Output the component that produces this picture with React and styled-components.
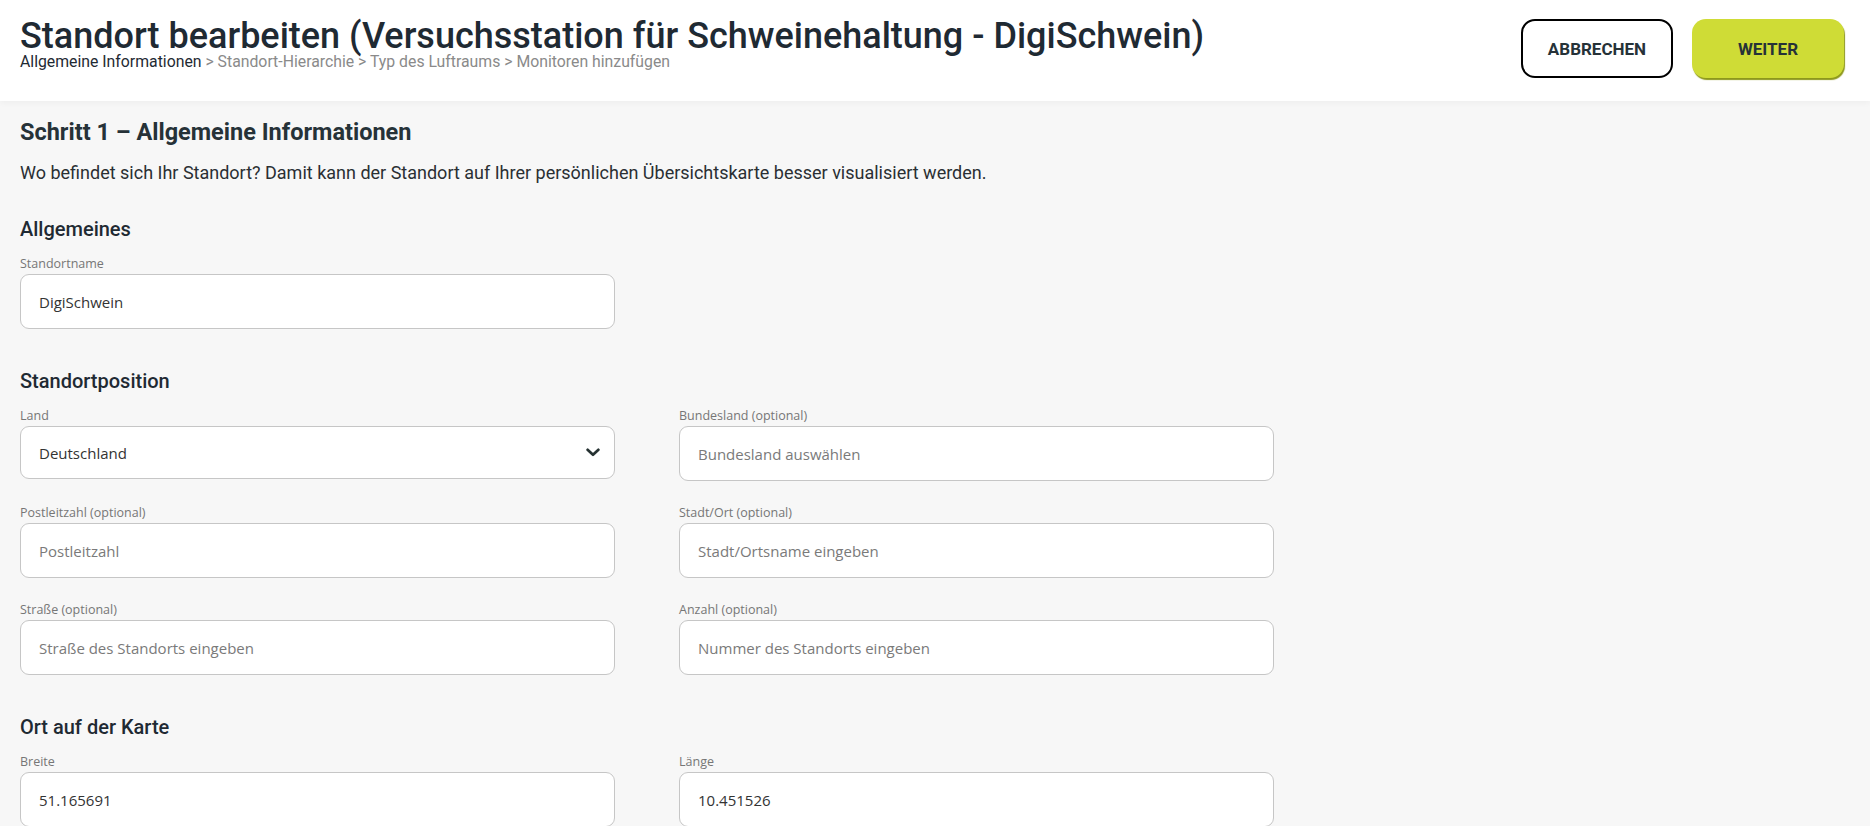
import React from 'react';
import styled, { createGlobalStyle } from 'styled-components';

const GlobalStyle = createGlobalStyle`
  html, body {
    margin: 0;
    padding: 0;
    background: #f7f7f7;
    font-family: Roboto, "Liberation Sans", sans-serif;
    color: #1f2a33;
  }
  * { box-sizing: border-box; }
`;

const Header = styled.header`
  height: 101px;
  background: #fff;
  display: flex;
  justify-content: space-between;
  align-items: flex-start;
  padding: 0 26px 0 20px;
  box-shadow: 0 2px 6px rgba(0, 0, 0, 0.04);
`;

const TitleBlock = styled.div`
  padding-top: 19px;
`;

const Title = styled.h1`
  margin: 0;
  font-size: 36px;
  line-height: 35px;
  font-weight: 500;
  color: #1f2a33;
`;

const Crumbs = styled.div`
  font-size: 15.8px;
  line-height: 16px;
  color: #8a8a8a;
`;

const Crumb = styled.span`
  color: ${(p) => (p.active ? '#1f2a33' : '#8a8a8a')};
`;

const Actions = styled.div`
  display: flex;
  gap: 19px;
  padding-top: 19px;
`;

const Button = styled.button`
  width: 152px;
  height: 59px;
  border-radius: 14px;
  font-family: Roboto, sans-serif;
  font-size: 17px;
  font-weight: 700;
  color: #263238;
  cursor: pointer;
  background: ${(p) => (p.primary ? '#cfdc36' : '#fff')};
  border: ${(p) => (p.primary ? 'none' : '2px solid #000')};
  box-shadow: ${(p) => (p.primary ? '1px 2px 1px #8e981c' : 'none')};
`;

const Main = styled.main`
  padding: 17px 20px 40px;
`;

const StepTitle = styled.h2`
  margin: 0;
  font-size: 23.5px;
  line-height: 28px;
  font-weight: 700;
  color: #263238;
`;

const Intro = styled.p`
  margin: 16px 0 0;
  font-size: 18px;
  line-height: 22px;
  color: #2a2f33;
`;

const Section = styled.section`
  margin-top: ${(p) => p.gap || 40}px;
`;

const SectionTitle = styled.h3`
  margin: 0 0 13px;
  font-size: 20px;
  line-height: 24px;
  font-weight: 500;
  color: #1f2a33;
`;

const FieldGrid = styled.div`
  display: grid;
  grid-template-columns: repeat(${(p) => p.cols || 2}, 595px);
  column-gap: 64px;
  row-gap: 22px;
  align-items: start;
`;

const Field = styled.label`
  display: flex;
  flex-direction: column;
`;

const Label = styled.span`
  font-family: "Open Sans", "Noto Sans", sans-serif;
  font-size: 12.5px;
  line-height: 19px;
  padding-bottom: 1px;
  color: #767676;
`;

const Box = styled.div`
  height: ${(p) => p.h || 55}px;
  background: #fff;
  border: 1px solid #c6c6c6;
  border-radius: 9px;
  display: flex;
  align-items: center;
  justify-content: space-between;
  padding: 0 14px 0 18px;
  font-family: "Open Sans", "Noto Sans", sans-serif;
  font-size: 15px;
  color: ${(p) => (p.placeholder ? '#7a7a7a' : '#333')};
`;

const Chevron = () => (
  <svg width="14" height="9" viewBox="0 0 14 9" fill="none">
    <polyline points="1.6,1.8 7,6.8 12.4,1.8" stroke="#263232" strokeWidth="2.7" strokeLinecap="round" strokeLinejoin="round" />
  </svg>
);

const Input = ({ label, value, placeholder }) => (
  <Field>
    <Label>{label}</Label>
    <Box placeholder={!value ? 1 : undefined}>{value || placeholder}</Box>
  </Field>
);

const Select = ({ label, value }) => (
  <Field>
    <Label>{label}</Label>
    <Box h={53}>
      {value}
      <Chevron />
    </Box>
  </Field>
);

export default function App() {
  return (
    <>
      <GlobalStyle />
      <Header>
        <TitleBlock>
          <Title>Standort bearbeiten (Versuchsstation für Schweinehaltung - DigiSchwein)</Title>
          <Crumbs>
            <Crumb active>Allgemeine Informationen</Crumb> &gt; Standort-Hierarchie &gt; Typ des Luftraums &gt; Monitoren hinzufügen
          </Crumbs>
        </TitleBlock>
        <Actions>
          <Button>ABBRECHEN</Button>
          <Button primary>WEITER</Button>
        </Actions>
      </Header>
      <Main>
        <StepTitle>Schritt 1 – Allgemeine Informationen</StepTitle>
        <Intro>
          Wo befindet sich Ihr Standort? Damit kann der Standort auf Ihrer persönlichen Übersichtskarte besser visualisiert werden.
        </Intro>

        <Section gap={33}>
          <SectionTitle>Allgemeines</SectionTitle>
          <FieldGrid cols={1}>
            <Input label="Standortname" value="DigiSchwein" />
          </FieldGrid>
        </Section>

        <Section gap={40}>
          <SectionTitle>Standortposition</SectionTitle>
          <FieldGrid>
            <Select label="Land" value="Deutschland" />
            <Input label="Bundesland (optional)" placeholder="Bundesland auswählen" />
            <Input label="Postleitzahl (optional)" placeholder="Postleitzahl" />
            <Input label="Stadt/Ort (optional)" placeholder="Stadt/Ortsname eingeben" />
            <Input label="Straße (optional)" placeholder="Straße des Standorts eingeben" />
            <Input label="Anzahl (optional)" placeholder="Nummer des Standorts eingeben" />
          </FieldGrid>
        </Section>

        <Section gap={40}>
          <SectionTitle>Ort auf der Karte</SectionTitle>
          <FieldGrid>
            <Input label="Breite" value="51.165691" />
            <Input label="Länge" value="10.451526" />
          </FieldGrid>
        </Section>
      </Main>
    </>
  );
}
